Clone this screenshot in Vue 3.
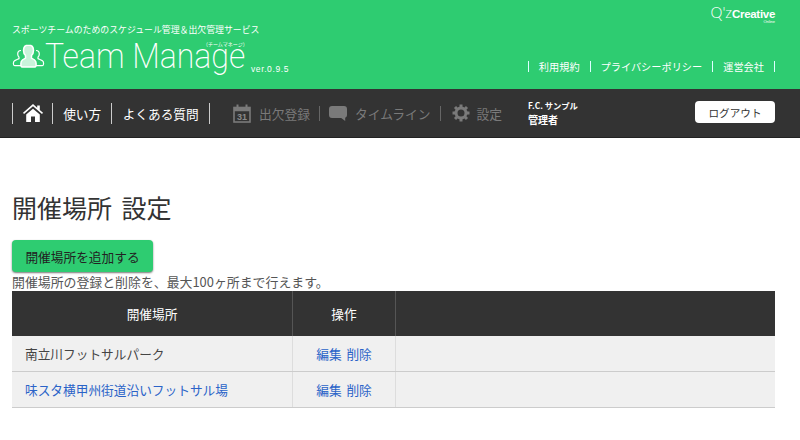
<template>
  <div class="page">
    <header class="top">
      <div class="brand">
        <p class="tagline">スポーツチームのためのスケジュール管理＆出欠管理サービス</p>
        <div class="logo">
          <svg class="people" width="33" height="24" viewBox="0 0 33 24" fill="none" stroke="#fff">
            <path d="M9 6.500c-2 0-3.300 1.500-3.300 3.500 0 1.300.5 2.400 1.300 3.100v1.500c-1.700.8-4.500 1.500-5.200 3-.5 1.100-.5 2.400-.1 3.400.3.500.8.700 1.300.700h6" stroke-width="1.200"/>
            <path d="M24 6.500c2 0 3.300 1.500 3.300 3.500 0 1.300-.5 2.400-1.300 3.100v1.500c1.700.8 4.500 1.500 5.200 3 .5 1.100.5 2.400.1 3.400-.3.500-.8.700-1.300.700h-6" stroke-width="1.200"/>
            <path d="M16.500 1c-3.300 0-5 2.500-5 5.500 0 2.100.8 3.900 2 5v2.600c-2 .9-3.800 1.800-4.300 3.500-.4 1.400-.4 3.100-.1 4.400.2.700.7 1 1.300 1h12.200c.6 0 1.100-.3 1.300-1 .3-1.300.3-3-.1-4.400-.5-1.700-2.300-2.600-4.300-3.500v-2.600c1.200-1.100 2-2.900 2-5 0-3-1.700-5.500-5-5.500z" fill="#c9f3da" stroke-width="1.500"/>
          </svg>
          <span class="logo-box"><span class="logo-text">Team Manage</span></span>
          <span class="kana">（チームマネージ）</span>
          <span class="ver">ver.0.9.5</span>
        </div>
      </div>
      <div class="top-right">
        <div class="maker"><span class="qz">Q'z</span><span class="creative">Creative</span><span class="online">Online</span></div>
        <ul class="sublinks">
          <li>利用規約</li>
          <li>プライバシーポリシー</li>
          <li>運営会社</li>
        </ul>
      </div>
    </header>
    <nav class="bar">
      <ul class="main-nav">
        <li class="home">
          <svg width="20" height="18" viewBox="0 0 20 18" fill="#fff"><path d="M10 0 0 8.800l1 1.200 9-7.800 9 7.800 1-1.200-3.200-2.800V1.500h-2.600v2.200zM3.200 10.600 10 4.700l6.800 5.900V18h-4.800v-5.500H8V18H3.200z"/></svg>
        </li>
        <li>使い方</li>
        <li>よくある質問</li>
      </ul>
      <ul class="member-nav">
        <li>
          <svg width="18" height="19" viewBox="0 0 18 19" fill="none" stroke="#7a7a7a"><rect x="1" y="3.500" width="16" height="14.500" stroke-width="1.600"/><path d="M1 5.500h16" stroke-width="3.500"/><path d="M4.500 0.500v4M13.500 0.500v4" stroke-width="2"/><text x="9" y="16" text-anchor="middle" fill="#8a8a8a" stroke="none" font-size="9" font-weight="700" font-family="Liberation Sans, sans-serif">31</text></svg>
          出欠登録
        </li>
        <li>
          <svg width="18" height="15" viewBox="0 0 18 15" fill="#7a7a7a"><path d="M3 0h12a3 3 0 0 1 3 3v6a3 3 0 0 1-1.800 2.800V15l-4-3H3a3 3 0 0 1-3-3V3a3 3 0 0 1 3-3z"/></svg>
          タイムライン
        </li>
        <li class="gear">
          <svg width="18" height="18" viewBox="0 0 18 18" fill="none" stroke="#7a7a7a"><circle cx="9" cy="9" r="5" stroke-width="3"/><path d="M9 0.500v3M9 14.500v3M0.500 9h3M14.500 9h3M3 3l2.200 2.200M12.800 12.800 15 15M15 3l-2.200 2.200M5.200 12.800 3 15" stroke-width="3"/></svg>
          設定
        </li>
      </ul>
      <div class="user">
        <span class="team">F.C. サンプル</span>
        <span class="role">管理者</span>
      </div>
      <button class="logout" type="button">ログアウト</button>
    </nav>
    <main class="content">
      <h1>開催場所 設定</h1>
      <button class="add" type="button">開催場所を追加する</button>
      <p class="note">開催場所の登録と削除を、最大100ヶ所まで行えます。</p>
      <table>
        <thead>
          <tr><th class="c1">開催場所</th><th class="c2">操作</th><th></th></tr>
        </thead>
        <tbody>
          <tr v-for="row in rows" :key="row.name">
            <td class="c1"><a v-if="row.link" class="lnk">{{ row.name }}</a><template v-else>{{ row.name }}</template></td>
            <td class="c2"><a class="lnk">編集</a> <a class="lnk">削除</a></td>
            <td></td>
          </tr>
        </tbody>
      </table>
    </main>
  </div>
</template>

<script setup>
const rows = [
  { name: '南立川フットサルパーク', link: false },
  { name: '味スタ横甲州街道沿いフットサル場', link: true }
]
</script>

<style>
body { margin: 0; background: #fff; }
</style>

<style scoped>
.page {
  width: 800px;
  height: 440px;
  overflow: hidden;
  font-family: "Noto Sans CJK JP", "Liberation Sans", sans-serif;
  color: #333;
}
ul { list-style: none; margin: 0; padding: 0; }
.top {
  height: 89px;
  background: #2ecc71;
  display: flex;
  justify-content: space-between;
  color: #fff;
}
.brand { padding: 22px 0 0 12px; }
.tagline { margin: 0; font-size: 8.900px; line-height: 15px; }
.logo { position: relative; display: flex; align-items: flex-start; height: 50px; }
.people { margin-top: 7px; flex: none; }
.logo-box { width: 202px; margin-top: 10px; flex: none; }
.logo-text {
  display: inline-block;
  font-family: Roboto, sans-serif;
  font-weight: 200;
  font-size: 35px;
  line-height: 20px;
  white-space: nowrap;
  transform: scaleX(0.915);
  transform-origin: left center;
}
.kana { position: absolute; left: 191px; top: 4px; font-size: 5px; line-height: 5px; white-space: nowrap; }
.ver { font-family: "Liberation Sans", sans-serif; font-size: 8.500px; letter-spacing: 0.600px; margin: 27px 0 0 4px; white-space: nowrap; }
.top-right { width: 280px; padding-right: 25px; display: flex; flex-direction: column; align-items: flex-end; }
.maker { position: relative; margin-top: 3px; height: 20px; display: flex; align-items: baseline; }
.qz { font-family: Lato, sans-serif; font-weight: 300; font-size: 15px; line-height: 18px; }
.creative { font-family: "Liberation Sans", sans-serif; font-weight: 700; font-size: 11.500px; line-height: 9px; letter-spacing: -0.300px; }
.online { position: absolute; right: 0; top: 16px; font-family: "Liberation Sans", sans-serif; font-size: 4px; line-height: 5px; }
.sublinks { margin-top: 38px; display: flex; font-size: 10.200px; line-height: 11px; border-right: 1px solid #dff; }
.sublinks li { padding: 0 10px; border-left: 1px solid #dff; }
.bar {
  background: #333;
  border-bottom: 1px solid #222;
  display: flex;
  align-items: center;
  box-sizing: border-box;
  height: 49px;
  padding: 0 25px 0 12px;
  color: #fff;
}
.main-nav { display: flex; align-items: center; border-right: 1px solid #ccc; font-size: 12.700px; }
.main-nav li { height: 21px; line-height: 21px; display: flex; align-items: center; padding: 0 10.200px; border-left: 1px solid #ccc; }
.main-nav li.home { padding: 0 9.500px; }
.member-nav { display: flex; align-items: center; margin-left: 23px; font-size: 12.750px; color: #7a7a7a; }
.member-nav li { display: flex; align-items: center; gap: 8px; height: 15px; padding: 0 9px; border-left: 1px solid #666; }
.member-nav li:first-child { border-left: 0; padding-left: 0; }
.member-nav li.gear { gap: 7px; padding-left: 11px; }
.user { margin-left: 17px; display: flex; flex-direction: column; font-weight: 700; }
.team { font-size: 8.300px; line-height: 13px; }
.role { font-size: 10px; line-height: 16px; }
.logout {
  width: 80px;
  height: 22px;
  margin: 0 0 2px auto;
  padding: 0;
  background: #fff;
  border: 0;
  border-radius: 4px;
  color: #333;
  font: inherit;
  font-size: 10.600px;
}
.content { padding: 0 25px 0 12px; }
h1 { margin: 0; padding-top: 52px; font-size: 25px; line-height: 34px; font-weight: 400; color: #333; word-spacing: 4px; }
.add {
  display: block;
  margin-top: 16px;
  width: 141px;
  height: 32px;
  padding: 0;
  background: #2ecc71;
  border: 0;
  border-radius: 4px;
  box-shadow: 0 1px 2px #777;
  color: #222;
  font: inherit;
  font-size: 12.700px;
}
.note { margin: 0; font-size: 12.900px; line-height: 19px; color: #555; }
table { width: 100%; border-collapse: collapse; font-size: 12.700px; table-layout: fixed; }
th { background: #333; color: #fff; height: 45px; padding: 0; font-weight: 400; border-left: 1px solid #555; }
th:first-child, td:first-child { border-left: 0; }
td { background: #f0f0f0; height: 35px; padding: 0; border-left: 1px solid #ddd; border-bottom: 1px solid #ccc; color: #444; }
.c1 { width: 280px; }
td.c1 { padding-left: 13px; }
.c2 { width: 102px; text-align: center; word-spacing: 2px; }
.lnk { color: #2a63c8; }
</style>
